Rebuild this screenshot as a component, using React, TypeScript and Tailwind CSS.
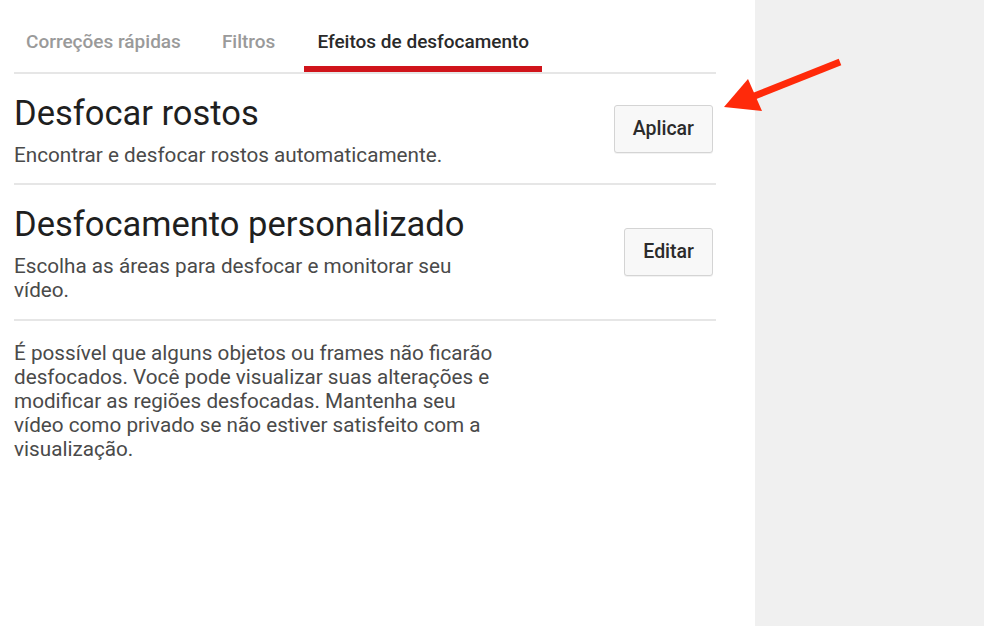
import React from "react";

const font = { fontFamily: "Roboto, 'Liberation Sans', sans-serif" };

function Btn({ label }: { label: string }) {
  return (
    <button className="mr-[3px] h-[48px] px-[18px] bg-[#f8f8f8] border border-[#d4d4d4] rounded-[3px] shadow-[0_1px_0_rgba(0,0,0,0.05)] text-[19.5px] font-medium text-[#2b2b2b]">
      {label}
    </button>
  );
}

export default function App() {
  return (
    <div className="w-[984px] h-[626px] flex bg-white overflow-hidden relative" style={font}>
      <div className="w-[755px] h-full bg-white pl-[14px]">
        <div className="w-[702px]">
          <div className="flex items-end gap-[17px] border-b-2 border-[#e6e6e6] h-[74px]">
            <div className="px-[12px] h-[52px] flex items-start pt-[8px] text-[19px] font-medium text-[#9a9a9a]">Correções rápidas</div>
            <div className="px-[12px] h-[52px] flex items-start pt-[8px] text-[19px] font-medium text-[#9a9a9a]">Filtros</div>
            <div className="px-[13px] h-[52px] flex items-start pt-[8px] text-[19px] font-medium text-[#2a2a2a] border-b-[6px] border-[#d0141b]">Efeitos de desfocamento</div>
          </div>

          <div className="flex items-center justify-between h-[111px] border-b-2 border-[#e6e6e6]">
            <div className="pt-[2px]">
              <div className="text-[34.5px] leading-[40px] text-[#1f1f1f]">Desfocar rostos</div>
              <div className="text-[20.7px] leading-[24px] text-[#4a4a4a] mt-[10px]">Encontrar e desfocar rostos automaticamente.</div>
            </div>
            <Btn label="Aplicar" />
          </div>

          <div className="flex items-center justify-between h-[136px] border-b-2 border-[#e6e6e6]">
            <div className="w-[492px] pt-[2px]">
              <div className="text-[34.5px] leading-[40px] text-[#1f1f1f] whitespace-nowrap">Desfocamento personalizado</div>
              <div className="text-[20.7px] leading-[24px] text-[#4a4a4a] mt-[10px]">Escolha as áreas para desfocar e monitorar seu vídeo.</div>
            </div>
            <Btn label="Editar" />
          </div>

          <p className="w-[492px] mt-[20px] text-[20.7px] leading-[24px] text-[#4a4a4a]">
            É possível que alguns objetos ou frames não ficarão desfocados. Você pode visualizar suas alterações e modificar as regiões desfocadas. Mantenha seu vídeo como privado se não estiver satisfeito com a visualização.
          </p>
        </div>
      </div>
      <div className="flex-1 h-full bg-[#f0f0f0]" />
      <svg className="absolute left-0 top-0 pointer-events-none" width="984" height="626">
        <line x1="840" y1="62" x2="752" y2="97" stroke="#ff2a0a" strokeWidth="7" strokeLinecap="butt" />
        <polygon points="724,107 748,79 762,111" fill="#ff2a0a" />
      </svg>
    </div>
  );
}
